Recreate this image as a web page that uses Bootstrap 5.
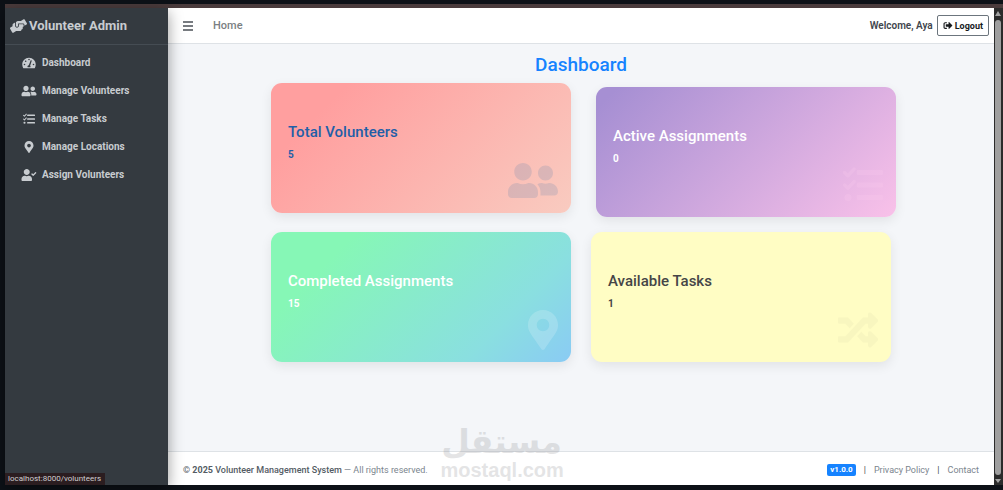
<!DOCTYPE html>
<html lang="en">
<head>
<meta charset="utf-8">
<meta name="viewport" content="width=device-width, initial-scale=1">
<title>Volunteer Admin</title>
<link rel="stylesheet" href="https://cdn.jsdelivr.net/npm/bootstrap@5.3.0/dist/css/bootstrap.min.css">
<style>
  body { background: #0d1117; font-family: Roboto, "Liberation Sans", sans-serif; font-size: 10px; line-height: 16px; }
  svg { fill: currentColor; flex: none; }
  a { text-decoration: none; }
  .frame { padding: 4px 0 5px 5px; }
  .strip { height: 4px; background: #4a3b3c; }
  .sidebar { width: 163px; background: #343a40; color: #c8ccd0; z-index: 2; box-shadow: 0 4px 14px rgba(0,0,0,.4); }
  .sidebar a { color: inherit; font-weight: 700; }
  .brand { height: 37px; padding: 0 5px 1px; gap: 2px; font-size: 13px; border-bottom: 1px solid #454c53; }
  .menu { padding: 4px 16px; }
  .menu a { height: 28px; gap: 5px; }
  .menu svg { width: 16px; height: 12px; }
  .topbar { height: 36px; background: #fff; border-bottom: 1px solid #dee2e6; padding: 0 5px 0 15px; }
  .topbar a { color: #7b7f83; font-size: 11px; font-weight: 500; }
  .toggler { border: 0; background: none; padding: 0; color: #777b80; display: flex; }
  .welcome { font-weight: 600; color: #3f464d; }
  .logout { height: 21px; padding: 0 5px; gap: 2px; font-size: 9px; font-weight: 700; line-height: 16px; color: #16191c; background: #fff; border: 1px solid #6c757d; border-radius: 2px; }
  .main-area { background: #f4f6f9; }
  .page-title { color: #1683ff; font-size: 19px; line-height: 24px; font-weight: 500; margin: 9px 0 6px; }
  .stats { display: grid; grid-template-columns: 1fr 1fr; gap: 19px 20px; max-width: 620px; margin: 0 auto; }
  .stat { height: 130px; border-radius: 11px; padding: 38px 17px; box-shadow: 0 4px 12px rgba(0,0,0,.08); position: relative; }
  .stat h2 { font-size: 15px; line-height: 22px; font-weight: 500; margin: 0 0 4px; }
  .stat p { font-weight: 700; margin: 0; }
  .stat svg { position: absolute; right: 13px; bottom: 12px; height: 40px; }
  .raised { margin: 4px -5px -4px 5px; }
  .s-red { background: linear-gradient(135deg, #ff9f9f 18%, #f9cbc0); color: #1f5fa8; }
  .s-violet { background: linear-gradient(135deg, #a68fd3 5%, #f9c1e9); color: #fff; }
  .s-green { background: linear-gradient(135deg, #86f7b6 20%, #8adfe0 75%, #8acbf4); color: #fff; }
  .s-yellow { background: #fffdc4; color: #454547; }
  .s-red svg { color: #4d7cad; opacity: .18; height: 41px; }
  .s-violet svg { color: #ffd0f0; opacity: .2; }
  .s-green svg { opacity: .18; }
  .s-yellow svg { opacity: .03; }
  .foot { height: 34px; background: #fff; border-top: 1px solid #dee2e6; padding: 2px 15px 0; color: #7b858e; font-size: 9px; }
  .foot strong { font-weight: 500; color: #545c64; }
  .foot a { color: #7b858e; }
  .foot b { font-weight: 700; }
  .divider { color: #3f464d; }
  .version { background: #1683ff; font-size: 8px; line-height: 10px; padding: 1px 3px; border-radius: 2px; }
  .watermark { position: absolute; left: 50%; bottom: 10px; width: 122px; margin-left: -61px; text-align: center; color: #6c6f75; opacity: .18; pointer-events: none; z-index: 3; }
  .watermark .ar { font: 700 33px/36px "DejaVu Sans", sans-serif; }
  .watermark .en { font: 700 20px/20px "Liberation Sans", sans-serif; }
  .scroller { width: 9px; background: #2b2b2b; padding: 3px 2px 2px 1px; gap: 4px; color: #a2a2a2; }
  .thumb { width: 6px; background: #9f9f9f; border-radius: 3px; }
  .hint { position: absolute; left: 5px; bottom: 5px; z-index: 4; background: #2b1d20; color: #d0ced0; padding: 0 4px 0 3px; font: 8px/12px Roboto, sans-serif; }
</style>
<script src="https://cdn.jsdelivr.net/npm/bootstrap@5.3.0/dist/js/bootstrap.bundle.min.js"></script>
</head>
<body>
<svg width="0" height="0" class="position-absolute" aria-hidden="true">
  <symbol id="i-friends" viewBox="0 0 640 512"><path d="M192 256c61.900 0 112-50.100 112-112S253.900 32 192 32 80 82.100 80 144s50.100 112 112 112zm76.800 32h-8.300c-20.800 10-43.900 16-68.500 16s-47.600-6-68.500-16h-8.300C51.600 288 0 339.600 0 403.200V432c0 26.500 21.500 48 48 48h288c26.500 0 48-21.500 48-48v-28.800c0-63.600-51.600-115.200-115.200-115.200zM480 256c53 0 96-43 96-96s-43-96-96-96-96 43-96 96 43 96 96 96zm48 32h-3.800c-13.900 4.800-28.600 8-44.200 8s-30.300-3.200-44.200-8H432c-20.400 0-39.200 5.900-55.700 15.400 24.400 26.300 39.700 61.200 39.700 99.800v38.400c0 2.200-.5 4.300-.6 6.400H592c26.500 0 48-21.500 48-48 0-61.900-50.100-112-112-112z"/></symbol>
  <symbol id="i-pin" viewBox="0 0 384 512"><path d="M172.268 501.670C26.970 291.031 0 269.413 0 192 0 85.961 85.961 0 192 0s192 85.961 192 192c0 77.413-26.970 99.031-172.268 309.670-9.535 13.774-29.930 13.773-39.464 0zM192 272c44.183 0 80-35.817 80-80s-35.817-80-80-80-80 35.817-80 80 35.817 80 80 80z"/></symbol>
  <symbol id="i-tasks" viewBox="0 0 512 512"><path d="M20 96l42 42 80-86M20 256l42 42 80-86" fill="none" stroke="currentColor" stroke-width="44" stroke-linecap="round" stroke-linejoin="round"/><circle cx="64" cy="416" r="46"/><rect x="176" y="64" width="336" height="64" rx="16"/><rect x="176" y="224" width="336" height="64" rx="16"/><rect x="176" y="384" width="336" height="64" rx="16"/></symbol>
  <symbol id="i-shuffle" viewBox="0 0 512 512"><path d="M504.971 359.029c9.373 9.373 9.373 24.569 0 33.941l-80 79.984c-15.010 15.010-40.971 4.490-40.971-16.971V416h-58.785a12.004 12.004 0 0 1-8.773-3.812l-70.556-75.596 53.333-57.143L352 336h32v-39.981c0-21.438 25.943-31.998 40.971-16.971l80 79.981zM12 176h84l52.781 56.551 53.333-57.143-70.556-75.596A11.999 11.999 0 0 0 122.785 96H12c-6.627 0-12 5.373-12 12v56c0 6.627 5.373 12 12 12zm372 0v39.984c0 21.460 25.961 31.980 40.971 16.971l80-79.984c9.373-9.373 9.373-24.569 0-33.941l-80-79.981C409.943 24.021 384 34.582 384 56.019V96h-58.785a12.004 12.004 0 0 0-8.773 3.812L96 336H12c-6.627 0-12 5.373-12 12v56c0 6.627 5.373 12 12 12h110.785c3.326 0 6.503-1.381 8.773-3.812L352 176h32z"/></symbol>
</svg>
<div class="frame d-flex flex-column min-vh-100 position-relative">
  <div class="strip"></div>
  <div class="d-flex flex-grow-1">
    <nav class="sidebar flex-shrink-0" aria-label="Main">
      <a href="#" class="brand d-flex align-items-center"><svg width="17" height="14" viewBox="0 0 640 512"><path d="M488 192H336v56c0 39.700-32.300 72-72 72s-72-32.300-72-72V126.400l-64.900 39C107.800 176.900 96 197.800 96 220.200v47.300l-80 46.200C.7 322.500-4.600 342.100 4.300 357.400l80 138.600c8.800 15.300 28.400 20.500 43.700 11.700L231.400 448H368c35.300 0 64-28.700 64-64h16c17.700 0 32-14.300 32-32v-64h8c13.300 0 24-10.700 24-24v-48c0-13.300-10.700-24-24-24zm147.700-37.400L555.700 16C546.900.7 527.300-4.500 512 4.300L408.600 64H306.400c-12 0-23.700 3.400-33.900 9.700L239 94.600c-9.400 5.800-15 16.100-15 27.100V248c0 22.100 17.900 40 40 40s40-17.900 40-40v-88h184c30.900 0 56 25.100 56 56v28.500l80-46.200c15.300-8.900 20.500-28.400 11.700-43.700z"/></svg>Volunteer Admin</a>
      <div class="menu">
        <a href="#" class="d-flex align-items-center"><svg viewBox="0 0 576 512"><path fill-rule="evenodd" d="M288 32C129 32 0 161 0 320c0 53 14 102 39 145 6 10 16 15 27 15h443c12 0 22-5 28-15 25-43 39-92 39-145 0-159-129-288-288-288zM288 72a34 34 0 1 1 0 68 34 34 0 1 1 0-68zM96 286a34 34 0 1 1 0 68 34 34 0 1 1 0-68zM146 144a34 34 0 1 1 0 68 34 34 0 1 1 0-68zM480 286a34 34 0 1 1 0 68 34 34 0 1 1 0-68zM386 136c13 4 20 18 16 31l-66 207c25 24 23 42 8 68H232c-23-42 0-88 46-91l78-199c4-13 17-20 30-16z"/></svg>Dashboard</a>
        <a href="#" class="d-flex align-items-center"><svg><use href="#i-friends"/></svg>Manage Volunteers</a>
        <a href="#" class="d-flex align-items-center"><svg><use href="#i-tasks"/></svg>Manage Tasks</a>
        <a href="#" class="d-flex align-items-center"><svg><use href="#i-pin"/></svg>Manage Locations</a>
        <a href="#" class="d-flex align-items-center"><svg viewBox="0 0 640 512"><path d="M224 256c70.700 0 128-57.300 128-128S294.700 0 224 0 96 57.300 96 128s57.300 128 128 128zm89.600 32h-16.700c-22.200 10.200-46.900 16-72.900 16s-50.600-5.800-72.900-16h-16.700C60.200 288 0 348.200 0 422.400V464c0 26.500 21.500 48 48 48h352c26.500 0 48-21.500 48-48v-41.600c0-74.200-60.200-134.400-134.400-134.400zM633.800 159.300l-27.900-28.200c-3.200-3.200-8.400-3.200-11.600-.1L497.600 227l-41.900-42.200c-3.200-3.200-8.400-3.200-11.600-.1l-28.200 27.900c-3.200 3.200-3.200 8.400-.1 11.600l75.700 76.300c3.200 3.200 8.400 3.200 11.600.1l130.700-129.700c3.200-3.200 3.200-8.400 0-11.600z"/></svg>Assign Volunteers</a>
      </div>
    </nav>
    <div class="main-area flex-grow-1 d-flex flex-column">
      <header class="topbar d-flex align-items-center">
        <button class="toggler me-3" type="button" aria-label="Toggle menu"><svg width="10" height="10" viewBox="0 0 10 10"><path d="M0 0h10v2H0zM0 4h10v2H0zM0 8h10v2H0z"/></svg></button>
        <a href="#" class="ms-1">Home</a>
        <span class="welcome ms-auto me-1">Welcome, Aya</span>
        <button class="logout d-flex align-items-center" type="button"><svg width="10" height="9" viewBox="0 0 512 512"><path d="M497 273L329 441c-15 15-41 4.500-41-17v-96H152c-13.300 0-24-10.700-24-24v-96c0-13.300 10.700-24 24-24h136V88c0-21.400 25.900-32 41-17l168 168c9.300 9.400 9.300 24.600 0 34zM192 436v-40c0-6.600-5.400-12-12-12H96c-17.700 0-32-14.300-32-32V160c0-17.700 14.300-32 32-32h84c6.600 0 12-5.400 12-12V76c0-6.600-5.400-12-12-12H96c-53 0-96 43-96 96v192c0 53 43 96 96 96h84c6.600 0 12-5.400 12-12z"/></svg>Logout</button>
      </header>
      <main class="flex-grow-1">
        <h1 class="page-title text-center">Dashboard</h1>
        <div class="stats">
          <section class="stat s-red"><h2>Total Volunteers</h2><p>5</p><svg width="50"><use href="#i-friends"/></svg></section>
          <section class="stat s-violet raised"><h2>Active Assignments</h2><p>0</p><svg width="40"><use href="#i-tasks"/></svg></section>
          <section class="stat s-green"><h2>Completed Assignments</h2><p>15</p><svg width="30"><use href="#i-pin"/></svg></section>
          <section class="stat s-yellow"><h2>Available Tasks</h2><p>1</p><svg width="40"><use href="#i-shuffle"/></svg></section>
        </div>
      </main>
      <footer class="foot d-flex align-items-center justify-content-between">
        <span><strong>© <b>2025</b> Volunteer Management System</strong> — All rights reserved.</span>
        <span class="d-flex align-items-center gap-2"><span class="badge version">v1.0.0</span><span class="divider">|</span><a href="#">Privacy Policy</a><span class="divider">|</span><a href="#">Contact</a></span>
      </footer>
    </div>
    <div class="scroller d-flex flex-column align-items-center" aria-hidden="true">
      <svg width="6" height="5" viewBox="0 0 6 5"><path d="M3 0l3 5H0z"/></svg>
      <div class="thumb flex-grow-1"></div>
      <svg width="6" height="4" viewBox="0 0 6 4"><path d="M0 0h6L3 4z"/></svg>
    </div>
  </div>
  <div class="watermark"><div class="ar" lang="ar" dir="rtl">مستقل</div><div class="en">mostaql.com</div></div>
  <div class="hint">localhost:8000/volunteers</div>
</div>
</body>
</html>
